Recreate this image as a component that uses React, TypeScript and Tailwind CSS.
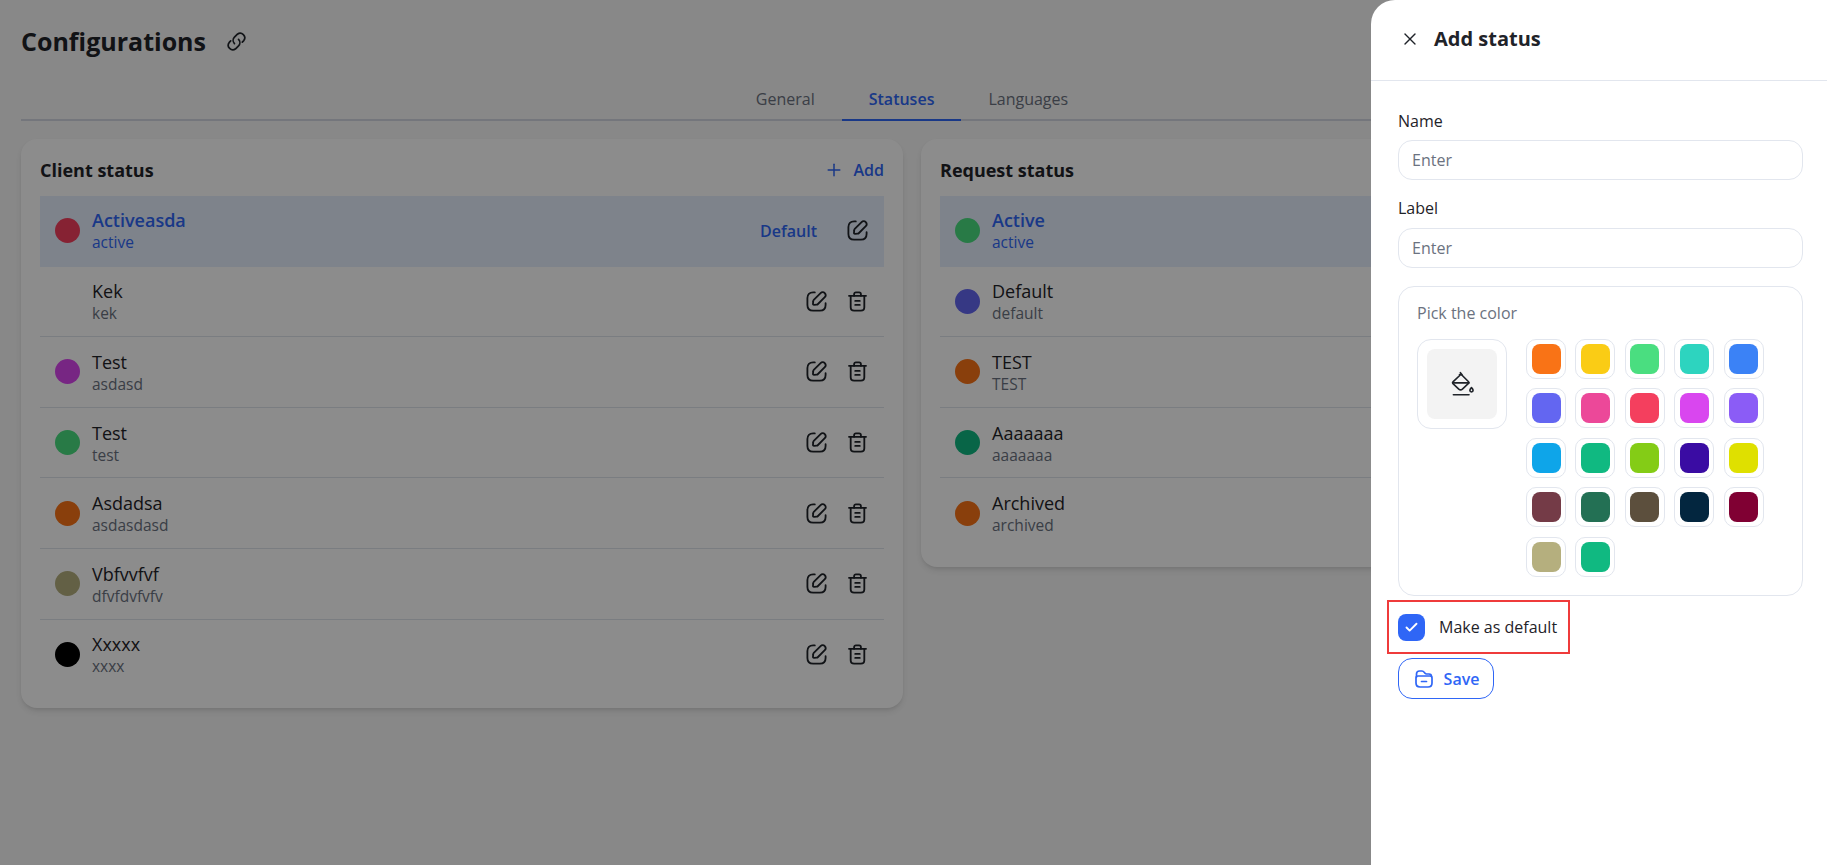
import React from 'react';
import { Check, Plus, X } from 'lucide-react';

interface Status {
  name: string;
  label: string;
  color: string;
}

const clientStatuses: Status[] = [
  { name: 'Activeasda', label: 'active', color: 'bg-[#f43f5e]' },
  { name: 'Kek', label: 'kek', color: 'bg-transparent' },
  { name: 'Test', label: 'asdasd', color: 'bg-[#d946ef]' },
  { name: 'Test', label: 'test', color: 'bg-[#4ade80]' },
  { name: 'Asdadsa', label: 'asdasdasd', color: 'bg-[#f97316]' },
  { name: 'Vbfvvfvf', label: 'dfvfdvfvfv', color: 'bg-[#b5af7e]' },
  { name: 'Xxxxx', label: 'xxxx', color: 'bg-black' },
];

const requestStatuses: Status[] = [
  { name: 'Active', label: 'active', color: 'bg-[#4ade80]' },
  { name: 'Default', label: 'default', color: 'bg-[#6366f1]' },
  { name: 'TEST', label: 'TEST', color: 'bg-[#f97316]' },
  { name: 'Aaaaaaa', label: 'aaaaaaa', color: 'bg-[#10b981]' },
  { name: 'Archived', label: 'archived', color: 'bg-[#f97316]' },
];

const swatches = [
  'bg-[#f97316]', 'bg-[#facc15]', 'bg-[#4ade80]', 'bg-[#2dd4bf]', 'bg-[#3b82f6]',
  'bg-[#6366f1]', 'bg-[#ec4899]', 'bg-[#f43f5e]', 'bg-[#d946ef]', 'bg-[#8b5cf6]',
  'bg-[#0ea5e9]', 'bg-[#10b981]', 'bg-[#84cc16]', 'bg-[#3a0ca3]', 'bg-[#dfe000]',
  'bg-[#743b47]', 'bg-[#237054]', 'bg-[#5c4f3d]', 'bg-[#03263f]', 'bg-[#800033]',
  'bg-[#b5af7e]', 'bg-[#10b981]',
];

const EditIcon = () => (
  <svg width="25" height="25" viewBox="0 0 22 22" fill="none" stroke="currentColor" strokeWidth="1.6" strokeLinecap="round" strokeLinejoin="round">
    <path d="M9.5 3H8C4.800 3 3 4.800 3 8v6c0 3.200 1.800 5 5 5h6c3.200 0 5-1.800 5-5v-1.500" />
    <path d="M14.600 3.600 8.600 9.600c-.3.300-.5.700-.5 1.100l-.2 2.400c0 .5.400.9.900.8l2.400-.2c.4 0 .8-.2 1.100-.5l6-6c1.100-1.100 1.100-2.500 0-3.600-1.100-1.100-2.600-1.100-3.700 0Z" />
  </svg>
);

const TrashIcon = () => (
  <svg width="25" height="25" viewBox="0 0 22 22" fill="none" stroke="currentColor" strokeWidth="1.6" strokeLinecap="round" strokeLinejoin="round">
    <path d="M3.500 6h15" />
    <path d="M8 6V4.600C8 3.700 8.700 3 9.600 3h2.800c.9 0 1.600.7 1.600 1.600V6" />
    <path d="M5 6v10c0 2 1 3 3 3h6c2 0 3-1 3-3V6" />
    <path d="M9 10.500h4M9 14h4" />
  </svg>
);

const LinkIcon = () => (
  <svg width="25" height="25" viewBox="0 0 22 22" fill="none" stroke="currentColor" strokeWidth="1.500" strokeLinecap="round" strokeLinejoin="round">
    <path d="M9.200 12.800a4 4 0 0 1 0-5.600l2.600-2.600a4 4 0 0 1 5.600 5.600l-1.300 1.300" />
    <path d="M12.800 9.200a4 4 0 0 1 0 5.600l-2.600 2.600a4 4 0 0 1-5.600-5.600l1.300-1.300" />
  </svg>
);

const BucketIcon = () => (
  <svg width="28" height="28" viewBox="0 0 26 26" fill="none" stroke="currentColor" strokeWidth="1.500" strokeLinecap="round" strokeLinejoin="round">
    <path d="M11.500 2.500 13 4.500" />
    <path d="M11.600 4.400 4.600 11c-.5.500-.5 1.200 0 1.700l5.400 5c1 .9 2.400.9 3.400 0l5.600-5.200c.5-.5.500-1.100.1-1.600l-6.500-6.500c-.7-.6-1.400-.6-2 0Z" />
    <path d="M4.400 12h15" />
    <path d="M21.800 16.400c-1 1.100-1.500 1.800-1.500 2.500a1.500 1.500 0 0 0 3 0c0-.7-.5-1.400-1.500-2.500Z" />
    <path d="M5 23h14.500" />
  </svg>
);

const SaveIcon = () => (
  <svg width="22" height="22" viewBox="0 0 22 22" fill="none" stroke="currentColor" strokeWidth="1.700" strokeLinecap="round" strokeLinejoin="round">
    <path d="M3.500 9V6c0-1.900 1-3 3-3h2.500c1 0 1.600.4 2.200 1.200l.8 1c.4.5.7.8 1.500.8H16c1.700 0 2.500.8 2.500 2.500" />
    <path d="M3 10c0-1.300.7-2 2-2h12c1.300 0 2 .7 2 2v5c0 2.500-1.500 4-4 4H7c-2.500 0-4-1.500-4-4v-5Z" />
    <path d="M8.500 13.500h5" />
  </svg>
);

const StatusRow = ({ status, active }: { status: Status; active: boolean }) => (
  <div
    className={`flex h-[70.6px] items-center border-b pl-[15px] pr-[14px] ${
      active ? 'border-transparent bg-[#e5eefd]' : 'border-[#dfe3ec] last:border-transparent'
    }`}
  >
    <span className={`h-[25px] w-[25px] shrink-0 rounded-full ${status.color}`} />
    <div className={`ml-[12px] min-w-0 flex-1 ${active ? '-mt-[1px]' : ''}`}>
      <div className={`text-[18px] leading-[24px] ${active ? 'font-semibold text-[#2f66f6]' : 'font-medium text-[#1f2329]'}`}>
        {status.name}
      </div>
      <div className={`text-[15.5px] leading-[20px] ${active ? 'text-[#2f66f6]' : 'text-[#6b7280]'}`}>
        {status.label}
      </div>
    </div>
    {active ? (
      <div className="flex items-center gap-[28px]">
        <span className="text-[16px] font-semibold text-[#2f66f6]">Default</span>
        <span className="text-[#1f2329]"><EditIcon /></span>
      </div>
    ) : (
      <div className="flex items-center gap-[16px] text-[#1f2329]">
        <EditIcon />
        <TrashIcon />
      </div>
    )}
  </div>
);

const StatusCard = ({ title, items, showAdd }: { title: string; items: Status[]; showAdd?: boolean }) => (
  <div className="rounded-2xl bg-white px-[19px] pb-[18px] pt-[16px] shadow-md">
    <div className="flex h-[41px] items-start justify-between">
      <span className="text-[18px] font-bold leading-[30px] text-[#1f2329]">{title}</span>
      {showAdd && (
        <span className="flex items-center gap-[10px] text-[16px] font-semibold leading-[30px] text-[#2f66f6]">
          <Plus size={20} strokeWidth={1.8} />
          Add
        </span>
      )}
    </div>
    {items.map((status, i) => (
      <StatusRow key={status.name + status.label} status={status} active={i === 0} />
    ))}
  </div>
);

const App = () => {
  return (
    <div className="relative h-[865px] w-full overflow-hidden bg-[#f7f7f7] font-['Open_Sans',sans-serif]">
      <div className="pl-[21px] pr-[24px]">
        <div className="flex h-[83px] items-center gap-[18px] text-[#1f2329]">
          <h1 className="text-[25px] font-bold">Configurations</h1>
          <LinkIcon />
        </div>
        <div className="flex h-[38px] justify-center border-b-2 border-[#d3d8e2] text-[16px]">
          <span className="px-[27px] leading-[32px] text-[#6b7280]">General</span>
          <span className="-mb-[2px] border-b-2 border-[#2f66f6] px-[27px] font-semibold leading-[32px] text-[#2f66f6]">Statuses</span>
          <span className="px-[27px] leading-[32px] text-[#6b7280]">Languages</span>
        </div>
        <div className="mt-[18px] grid grid-cols-2 items-start gap-[18px]">
          <StatusCard title="Client status" items={clientStatuses} showAdd />
          <StatusCard title="Request status" items={requestStatuses} />
        </div>
      </div>

      <div className="absolute inset-0 bg-black/45" />

      <div className="absolute bottom-0 right-0 top-0 flex w-[456px] flex-col rounded-tl-3xl bg-white text-[#1f2329]">
        <div className="flex h-[81px] items-center gap-[14px] border-b border-[#e2e6ee] pb-[2px] pl-[29px]">
          <X size={20} strokeWidth={1.6} />
          <span className="text-[20px] font-bold">Add status</span>
        </div>
        <div className="flex flex-col pl-[27px] pr-[24px] pt-[28px]">
          <label className="text-[16px] font-medium leading-[24px]">Name</label>
          <input
            placeholder="Enter"
            className="mt-[7px] h-[40px] rounded-[14px] border border-[#e2e6ee] px-[13px] text-[16px] placeholder:text-[#6b7280]"
          />
          <label className="mt-[16px] text-[16px] font-medium leading-[24px]">Label</label>
          <input
            placeholder="Enter"
            className="mt-[8px] h-[40px] rounded-[14px] border border-[#e2e6ee] px-[13px] text-[16px] placeholder:text-[#6b7280]"
          />
          <div className="mt-[18px] h-[310px] rounded-2xl border border-[#e2e6ee] px-[18px] pt-[14px]">
            <div className="text-[16px] leading-[24px] text-[#6b7280]">Pick the color</div>
            <div className="mt-[14px] flex items-start gap-[19px]">
              <div className="flex h-[90px] w-[90px] items-center justify-center rounded-[14px] border border-[#e2e6ee]">
                <div className="flex h-[70px] w-[70px] items-center justify-center rounded-lg bg-[#f3f3f3]">
                  <BucketIcon />
                </div>
              </div>
              <div className="grid grid-cols-[repeat(5,40px)] gap-[9.400px]">
                {swatches.map((color, i) => (
                  <div key={i} className="flex h-[40px] w-[40px] items-center justify-center rounded-[10px] border border-[#e2e6ee]">
                    <span className={`h-[30px] w-[29px] rounded-lg ${color}`} />
                  </div>
                ))}
              </div>
            </div>
          </div>
          <div className="-ml-[11px] mt-[4px] flex h-[54px] w-[183px] items-center gap-[14px] border-2 border-[#ef3b3b] pl-[9px]">
            <span className="flex h-[27px] w-[27px] items-center justify-center rounded-lg bg-[#2f66f6] text-white">
              <Check size={15} strokeWidth={3} />
            </span>
            <span className="text-[16px] font-medium">Make as default</span>
          </div>
          <button className="mt-[4px] flex h-[41px] w-[96px] items-center justify-center gap-[9px] rounded-[14px] border border-[#2f66f6] text-[16px] font-semibold text-[#2f66f6]">
            <SaveIcon />
            Save
          </button>
        </div>
      </div>
    </div>
  );
};

export default App;
